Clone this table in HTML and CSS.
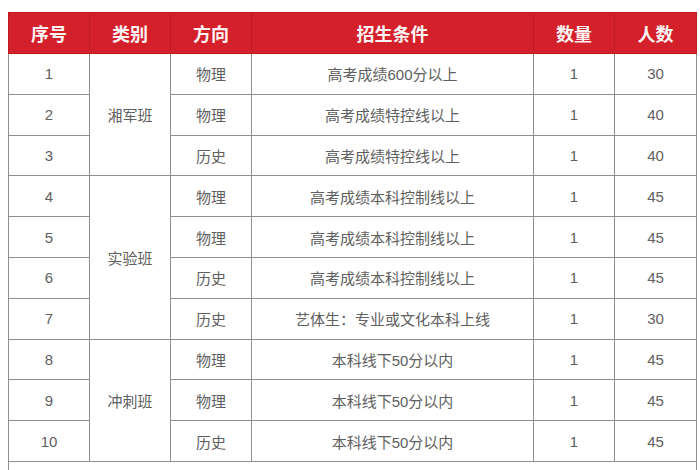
FILE: index.html
```html
<!DOCTYPE html>
<html lang="zh">
<head>
<meta charset="utf-8">
<link rel="stylesheet" href="styles.css">
</head>
<body>
<table class="plan">
  <colgroup>
    <col class="c-narrow"><col class="c-narrow"><col class="c-narrow"><col class="c-wide"><col class="c-narrow"><col class="c-last">
  </colgroup>
  <thead>
    <tr><th>序号</th><th>类别</th><th>方向</th><th>招生条件</th><th>数量</th><th>人数</th></tr>
  </thead>
  <tbody>
    <tr><td>1</td><td rowspan="3">湘军班</td><td>物理</td><td>高考成绩600分以上</td><td>1</td><td>30</td></tr>
    <tr><td>2</td><td>物理</td><td>高考成绩特控线以上</td><td>1</td><td>40</td></tr>
    <tr><td>3</td><td>历史</td><td>高考成绩特控线以上</td><td>1</td><td>40</td></tr>
    <tr><td>4</td><td rowspan="4">实验班</td><td>物理</td><td>高考成绩本科控制线以上</td><td>1</td><td>45</td></tr>
    <tr><td>5</td><td>物理</td><td>高考成绩本科控制线以上</td><td>1</td><td>45</td></tr>
    <tr><td>6</td><td>历史</td><td>高考成绩本科控制线以上</td><td>1</td><td>45</td></tr>
    <tr><td>7</td><td>历史</td><td>艺体生：专业或文化本科上线</td><td>1</td><td>30</td></tr>
    <tr><td>8</td><td rowspan="3">冲刺班</td><td>物理</td><td>本科线下50分以内</td><td>1</td><td>45</td></tr>
    <tr><td>9</td><td>物理</td><td>本科线下50分以内</td><td>1</td><td>45</td></tr>
    <tr><td>10</td><td>历史</td><td>本科线下50分以内</td><td>1</td><td>45</td></tr>
    <tr class="tail"><td colspan="6"></td></tr>
  </tbody>
</table>
</body>
</html>
```
FILE: styles.css
```css
html, body {
  margin: 0;
  padding: 0;
  background: #ffffff;
}
body {
  padding: 12px 0 0 8px;
  font-family: "Liberation Sans", "Noto Sans CJK SC", sans-serif;
  overflow: hidden;
  height: 470px;
  box-sizing: border-box;
}
.plan {
  border-collapse: collapse;
  table-layout: fixed;
  width: 688px;
}
.c-narrow { width: 81px; }
.c-wide { width: 282px; }
.c-last { width: 82px; }
.plan th {
  background: #d3202a;
  color: #fff4f4;
  font-family: "Noto Sans CJK SC", sans-serif;
  font-size: 18px;
  font-weight: 700;
  height: 40px;
  padding: 0;
  border: 1px solid #c01a23;
  text-align: center;
  vertical-align: middle;
}
.plan td {
  height: 39.8px;
  padding: 0;
  border: 1.5px solid #8f8f8f;
  color: #606060;
  font-size: 15px;
  text-align: center;
  vertical-align: middle;
}
.plan .tail td {
  height: 30px;
}
```
